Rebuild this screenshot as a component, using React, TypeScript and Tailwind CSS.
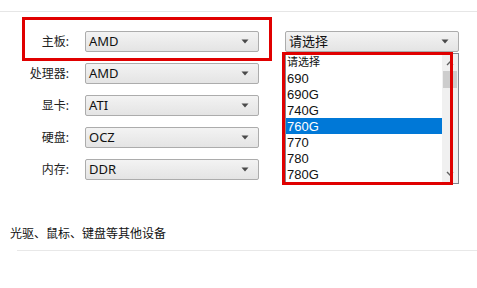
import React from "react";

const FONT = { fontFamily: '"Noto Sans", "Noto Sans CJK SC", sans-serif' };
const LIST_FONT = { fontFamily: '"Liberation Sans", "Noto Sans CJK SC", sans-serif' };

const rows = [
  { label: "主板:", value: "AMD" },
  { label: "处理器:", value: "AMD" },
  { label: "显卡:", value: "ATI" },
  { label: "硬盘:", value: "OCZ" },
  { label: "内存:", value: "DDR" },
];

const options = ["请选择", "690", "690G", "740G", "760G", "770", "780", "780G"];

function Arrow() {
  return (
    <svg width="8" height="5" viewBox="0 0 8 5" className="shrink-0">
      <path d="M0.5 0.5 H7.5 L4 4.5 Z" fill="#4a4a4a" />
    </svg>
  );
}

function Combo({ value }: { value: string }) {
  return (
    <div className="flex h-[21px] w-[174px] items-center justify-between rounded-[2px] border border-[#acacac] bg-gradient-to-b from-[#f3f3f3] to-[#e4e4e4] pl-[3px] pr-[9px] text-[13px] leading-none text-[#111]">
      <span>{value}</span>
      <Arrow />
    </div>
  );
}

export default function App() {
  return (
    <div className="relative h-[288px] w-[477px] overflow-hidden bg-white" style={FONT}>
      <div className="h-[12px] border-b border-[#e6e6e6]" />

      <div className="flex pt-[19px]">
        <div className="flex flex-col gap-[11px]">
          {rows.map((r) => (
            <div key={r.label} className="flex items-center">
              <div className="w-[70px] pr-[1px] text-right text-[12px] leading-none text-[#222]">{r.label}</div>
              <div className="ml-[15px]">
                <Combo value={r.value} />
              </div>
            </div>
          ))}
        </div>

        <div className="ml-[26px] flex flex-col">
          <Combo value="请选择" />
          <div className="mt-[1px] flex h-[131px] w-[174px] border border-[#828790] bg-white">
            <div className="flex flex-1 flex-col" style={LIST_FONT}>
              {options.map((o, i) => (
                <div
                  key={o}
                  className={
                    "flex h-[16.1px] items-center pl-[1px] leading-none " +
                    (i === 0 ? "text-[11px] " : "text-[13px] ") +
                    (o === "760G" ? "bg-[#0078d7] text-white" : "text-[#111]")
                  }
                >
                  {o}
                </div>
              ))}
            </div>
            <div className="flex w-[16px] flex-col items-center bg-[#f0f0f0]">
              <svg width="8" height="6" viewBox="0 0 8 6" className="mt-[6px]">
                <path d="M1 5 L4 2 L7 5" stroke="#606060" strokeWidth="1.4" fill="none" />
              </svg>
              <div className="mt-[5px] h-[17px] w-[14px] bg-[#cdcdcd]" />
              <div className="flex-1" />
              <svg width="8" height="6" viewBox="0 0 8 6" className="mb-[6px]">
                <path d="M1 1 L4 4 L7 1" stroke="#606060" strokeWidth="1.4" fill="none" />
              </svg>
            </div>
          </div>
        </div>
      </div>

      <div className="mt-[44px] pl-[10px] text-[12px] leading-none text-[#111]">光驱、鼠标、键盘等其他设备</div>
      <div className="ml-[17px] mt-[10px] border-b border-[#e8e8e8]" />

      <div className="pointer-events-none absolute left-[22px] top-[17px] h-[44px] w-[250px] border-[3px] border-[#e00000]" />
      <div className="pointer-events-none absolute left-[282px] top-[52px] h-[133px] w-[171px] border-[3px] border-[#e00000]" />
    </div>
  );
}
